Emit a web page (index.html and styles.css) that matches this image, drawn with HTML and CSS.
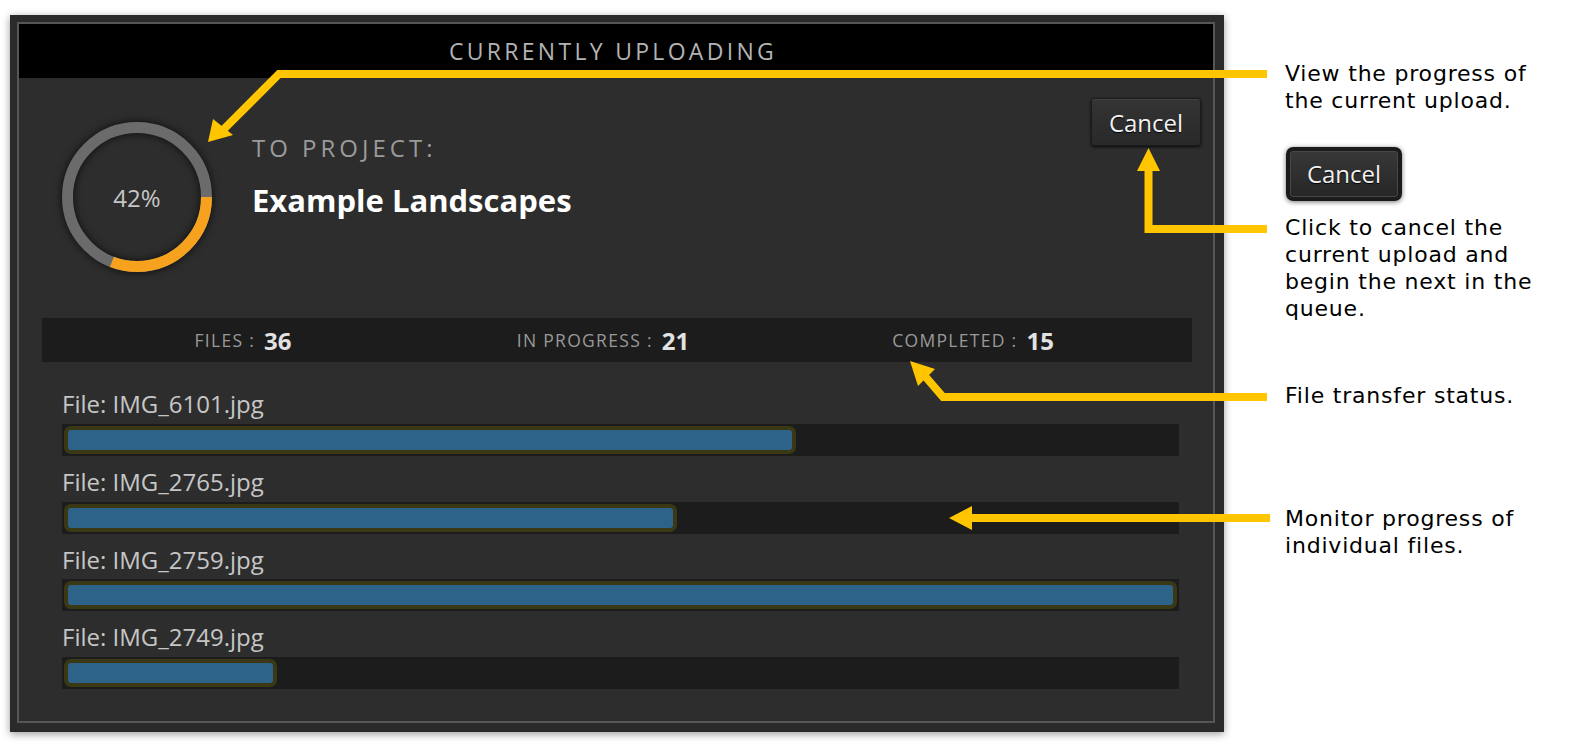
FILE: index.html
```html
<!DOCTYPE html>
<html>
<head>
<meta charset="utf-8">
<title>Currently Uploading</title>
<link rel="stylesheet" href="styles.css">
</head>
<body>
<div class="page">
  <div class="dialog">
    <div class="panel">
      <div class="header">CURRENTLY UPLOADING</div>
      <div class="top">
        <div class="ring">
          <svg class="ring-svg" width="150" height="150" viewBox="0 0 150 150">
            <circle cx="75" cy="75" r="69.5" fill="none" stroke="#6b6b6b" stroke-width="11"/>
            <circle cx="75" cy="75" r="69.5" fill="none" stroke="#f7a21f" stroke-width="11" stroke-dasharray="134.6 500"/>
          </svg>
          <span class="pct">42%</span>
        </div>
        <div class="project">
          <div class="proj-label">TO PROJECT:</div>
          <div class="proj-name">Example Landscapes</div>
        </div>
        <button class="btn">Cancel</button>
      </div>
      <div class="stats">
        <div class="stat"><span class="lbl">FILES :</span><span class="num">36</span></div>
        <div class="stat"><span class="lbl">IN PROGRESS :</span><span class="num">21</span></div>
        <div class="stat"><span class="lbl">COMPLETED :</span><span class="num">15</span></div>
      </div>
      <div class="files">
        <div class="file">
          <div class="fname">File: IMG_6101.jpg</div>
          <div class="track"><div class="fill" style="width:732px"></div></div>
        </div>
        <div class="file">
          <div class="fname">File: IMG_2765.jpg</div>
          <div class="track"><div class="fill" style="width:613px"></div></div>
        </div>
        <div class="file">
          <div class="fname">File: IMG_2759.jpg</div>
          <div class="track"><div class="fill" style="width:100%"></div></div>
        </div>
        <div class="file">
          <div class="fname">File: IMG_2749.jpg</div>
          <div class="track"><div class="fill" style="width:213px"></div></div>
        </div>
      </div>
    </div>
  </div>

  <div class="notes">
    <p class="note note1">View the progress of<br>the current upload.</p>
    <div class="big-btn">Cancel</div>
    <p class="note note2">Click to cancel the<br>current upload and<br>begin the next in the<br>queue.</p>
    <p class="note note3">File transfer status.</p>
    <p class="note note4">Monitor progress of<br>individual files.</p>
  </div>

  <svg class="arrows" width="1580" height="748" viewBox="0 0 1580 748">
    <g fill="none" stroke="#ffc600" stroke-width="8" stroke-linejoin="miter">
      <polyline points="1267,74 279,74 224,129"/>
      <polyline points="1267,229 1148.5,229 1148.5,168"/>
      <polyline points="1267,397 943,397 924,375"/>
      <polyline points="1270,518 968,518"/>
    </g>
    <g fill="#ffc600">
      <polygon points="208,142 213,119 233,135"/>
      <polygon points="1148.5,148 1137,171 1160,171"/>
      <polygon points="910,361 935,369 918,386"/>
      <polygon points="949,518 972,506 972,530"/>
    </g>
  </svg>
</div>
</body>
</html>
```
FILE: styles.css
```css
* { box-sizing: border-box; }
html, body { margin: 0; padding: 0; background: #fff; }
body {
  width: 1580px;
  height: 748px;
  overflow: hidden;
  font-family: "Open Sans", "Noto Sans", sans-serif;
}
.page {
  position: relative;
  display: flex;
  align-items: flex-start;
  width: 1580px;
  height: 748px;
}

/* dialog */
.dialog {
  flex: none;
  margin: 15px 0 0 10px;
  width: 1214px;
  height: 717px;
  padding: 7px 9px 9px 7px;
  background: #2a2a2a;
  box-shadow: 0 2px 8px rgba(0, 0, 0, 0.4);
}
.panel {
  height: 100%;
  border: 2px solid #565656;
  background: #2d2d2d;
  display: flex;
  flex-direction: column;
}
.header {
  flex: none;
  height: 54px;
  background: #000;
  color: #b3b3b3;
  font-size: 23px;
  letter-spacing: 3.3px;
  line-height: 54px;
  text-align: center;
  padding-right: 6px;
}

/* top section */
.top {
  flex: none;
  height: 240px;
  display: flex;
  align-items: flex-start;
  padding: 0 12px 0 43px;
}
.ring {
  position: relative;
  flex: none;
  width: 150px;
  height: 150px;
  margin-top: 44px;
}
.ring-svg {
  display: block;
  filter: drop-shadow(0 0 4px rgba(0, 0, 0, 0.75));
}
.pct {
  position: absolute;
  inset: 0;
  display: flex;
  align-items: center;
  justify-content: center;
  color: #c6c6c6;
  font-size: 24px;
}
.project { margin: 55px 0 0 40px; }
.proj-label {
  font-size: 24px;
  line-height: 30px;
  letter-spacing: 4px;
  color: #9b9b9b;
}
.proj-name {
  margin-top: 19px;
  font-size: 31px;
  line-height: 36px;
  font-weight: 700;
  color: #fff;
}
.btn {
  flex: none;
  margin: 20px 0 0 auto;
  width: 110px;
  height: 48px;
  padding: 0;
  font: inherit;
  font-size: 24px;
  color: #f2f2f2;
  text-shadow: 0 1px 1px #000;
  background: linear-gradient(#343434, #292929);
  border: 1px solid #1a1a1a;
  border-radius: 3px;
  box-shadow: 0 1px 3px rgba(0, 0, 0, 0.8), inset 0 1px 0 rgba(255, 255, 255, 0.08);
}

/* stats bar */
.stats {
  flex: none;
  margin: 0 21px 0 22.5px;
  height: 44px;
  background: #1c1c1c;
  display: grid;
  grid-template-columns: 403px 317px 423px;
}
.stat {
  display: flex;
  align-items: center;
  justify-content: center;
  gap: 9px;
}
.lbl {
  font-size: 17.5px;
  letter-spacing: 1.3px;
  color: #999;
}
.num {
  font-size: 24px;
  font-weight: 700;
  color: #e2e2e2;
}

/* file list */
.files {
  padding: 27.4px 34px 0 43px;
  display: flex;
  flex-direction: column;
  gap: 11px;
}
.fname {
  font-size: 24px;
  line-height: 30px;
  color: #c6c6c6;
  margin-bottom: 4.6px;
}
.track {
  height: 32px;
  padding: 2px;
  background: #1c1c1c;
}
.fill {
  height: 28px;
  border: 4px solid #3b3816;
  border-radius: 7px;
  background: #2e6389;
}

/* annotations */
.notes {
  flex: none;
  margin-left: 61px;
  display: flex;
  flex-direction: column;
  align-items: flex-start;
  font-family: "DejaVu Sans", Verdana, sans-serif;
  font-size: 22px;
  line-height: 27px;
  letter-spacing: 0.8px;
  color: #000;
}
.note { margin: 0; white-space: nowrap; }
.note1 { margin-top: 59.6px; }
.big-btn {
  margin-top: 33.4px;
  margin-left: 1px;
  width: 116px;
  height: 54px;
  display: flex;
  align-items: center;
  justify-content: center;
  font-family: "Open Sans", "Noto Sans", sans-serif;
  font-size: 24px;
  letter-spacing: 0;
  color: #f0f0f0;
  text-shadow: 0 1px 1px #000;
  background: linear-gradient(#383838, #262626);
  border: 4px solid #1b1b1b;
  border-radius: 7px;
  box-shadow: 0 1px 5px rgba(0, 0, 0, 0.55), inset 0 0 0 1px #474747;
}
.note2 { margin-top: 12.9px; }
.note3 { margin-top: 60.5px; }
.note4 { margin-top: 95.5px; }

.arrows {
  position: absolute;
  left: 0;
  top: 0;
  pointer-events: none;
}
```
